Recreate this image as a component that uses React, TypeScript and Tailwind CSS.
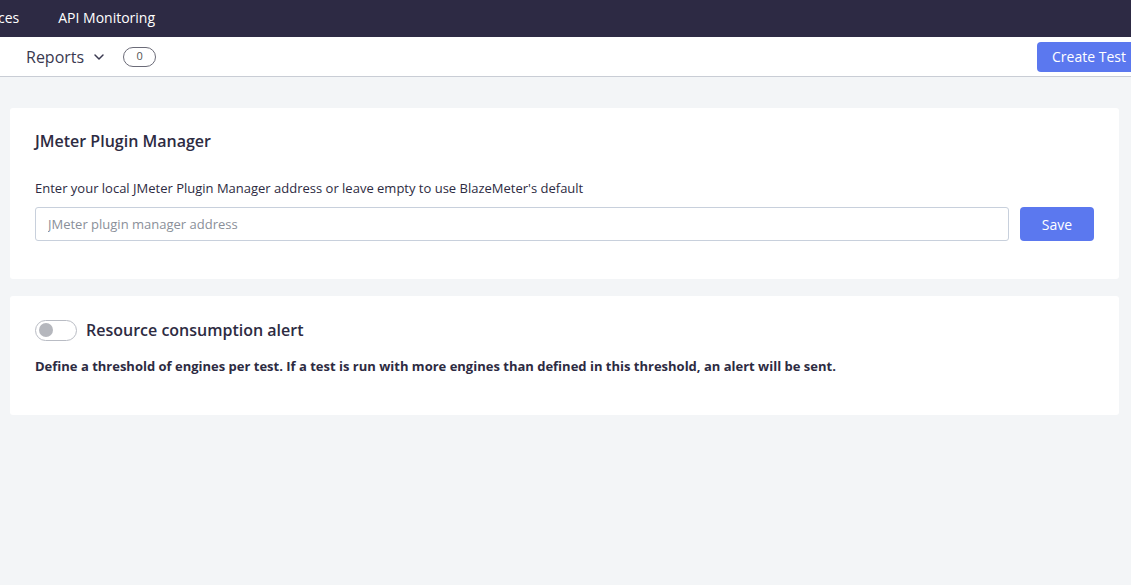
import { ChevronDown } from "lucide-react";

const font = { fontFamily: '"Open Sans", "Noto Sans", sans-serif' };

export default function App() {
  return (
    <div style={font} className="min-h-[585px] w-full bg-[#f3f5f7] text-[#2b2a3f]">
      {/* top nav */}
      <div className="flex h-[37px] items-center gap-[39px] bg-[#2d2a44] pb-[3px] text-[14px] text-white">
        <span className="-ml-[2px]">ces</span>
        <span>API Monitoring</span>
      </div>

      {/* sub bar */}
      <div className="flex h-[40px] items-center border-b border-[#c9cdd5] bg-white">
        <div className="ml-[26px] flex items-center text-[16px] text-[#3a3950]">
          Reports
          <ChevronDown className="ml-[7px] h-4 w-4" strokeWidth={2.2} />
        </div>
        <span className="ml-[16px] flex h-[20px] w-[33px] items-center justify-center rounded-full border border-[#6b6b78] text-[11px] text-[#555]">
          0
        </span>
        <button className="ml-auto h-[30px] w-[94px] self-center rounded-l-[4px] bg-[#5b78ef] pl-[15px] text-left text-[14px] whitespace-nowrap text-white">
          Create Test
        </button>
      </div>

      <div className="flex flex-col gap-[17px] pl-[10px] pr-[12px] pt-[31px]">
        {/* card 1 */}
        <div className="h-[171px] rounded-[3px] bg-white px-[25px] pt-[22px]">
          <h2 className="text-[16px] font-semibold leading-[22px] text-[#2d2b42]">JMeter Plugin Manager</h2>
          <p className="mt-[27px] text-[13px] leading-[18px] text-[#2d2b42]">
            Enter your local JMeter Plugin Manager address or leave empty to use BlazeMeter's default
          </p>
          <div className="mt-[10px] flex items-center gap-[11px]">
            <input
              placeholder="JMeter plugin manager address"
              className="h-[34px] flex-1 rounded-[3px] border border-[#c8d0dc] px-[12px] text-[13px] outline-none placeholder:text-[#8a8f99]"
              style={font}
            />
            <button className="h-[34px] w-[74px] rounded-[4px] bg-[#5b78ef] text-[14px] text-white">Save</button>
          </div>
        </div>

        {/* card 2 */}
        <div className="h-[119px] rounded-[3px] bg-white px-[25px] pt-[22px]">
          <div className="flex items-center gap-[9px]">
            <span className="flex h-[21px] w-[42px] items-center rounded-full border border-[#b9bcc4] bg-white pl-[3px]">
              <span className="h-[14px] w-[14px] rounded-full bg-[#b5b7bd]" />
            </span>
            <span className="text-[16px] font-semibold text-[#2d2b42]">Resource consumption alert</span>
          </div>
          <p className="mt-[15px] text-[13px] font-bold leading-[18px] text-[#2d2b42]">
            Define a threshold of engines per test. If a test is run with more engines than defined in this threshold, an alert will be sent.
          </p>
        </div>
      </div>
    </div>
  );
}
